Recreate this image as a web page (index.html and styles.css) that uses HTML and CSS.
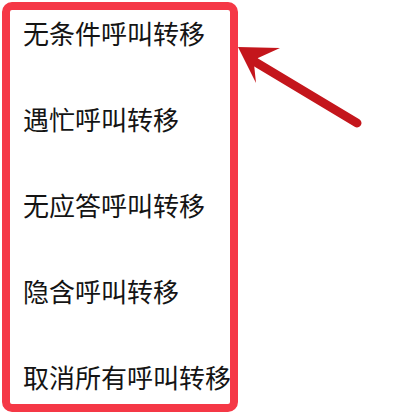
FILE: index.html
```html
<!DOCTYPE html>
<html lang="zh-CN">
<head>
<meta charset="utf-8">
<link rel="stylesheet" href="styles.css">
</head>
<body>
<div class="frame">
  <ul class="menu">
    <li class="item">无条件呼叫转移</li>
    <li class="item">遇忙呼叫转移</li>
    <li class="item">无应答呼叫转移</li>
    <li class="item">隐含呼叫转移</li>
    <li class="item">取消所有呼叫转移</li>
  </ul>
</div>
<svg class="arrow" width="400" height="414" viewBox="0 0 400 414">
  <line x1="252" y1="60" x2="357" y2="123" stroke="#c4161c" stroke-width="9" stroke-linecap="round"/>
  <polygon points="238,47 280,48 258,58 254,64 256,83" fill="#c4161c"/>
</svg>
</body>
</html>
```
FILE: styles.css
```css
html, body {
  margin: 0;
  padding: 0;
  background: #ffffff;
}
body {
  width: 400px;
  height: 414px;
  position: relative;
  overflow: hidden;
  font-family: "Noto Sans CJK SC", "Noto Sans", sans-serif;
}
.frame {
  box-sizing: border-box;
  margin: 2px 0 0 2px;
  width: 236px;
  height: 410px;
  border: 8px solid #f53846;
  border-radius: 10px;
  overflow: hidden;
  background: #ffffff;
}
.menu {
  list-style: none;
  margin: 0;
  padding: 6px 0 0 13px;
  display: flex;
  flex-direction: column;
  gap: 52px;
}
.item {
  height: 34px;
  line-height: 34px;
  font-size: 26px;
  color: #141414;
  white-space: nowrap;
}
.arrow {
  position: absolute;
  left: 0;
  top: 0;
}
```
